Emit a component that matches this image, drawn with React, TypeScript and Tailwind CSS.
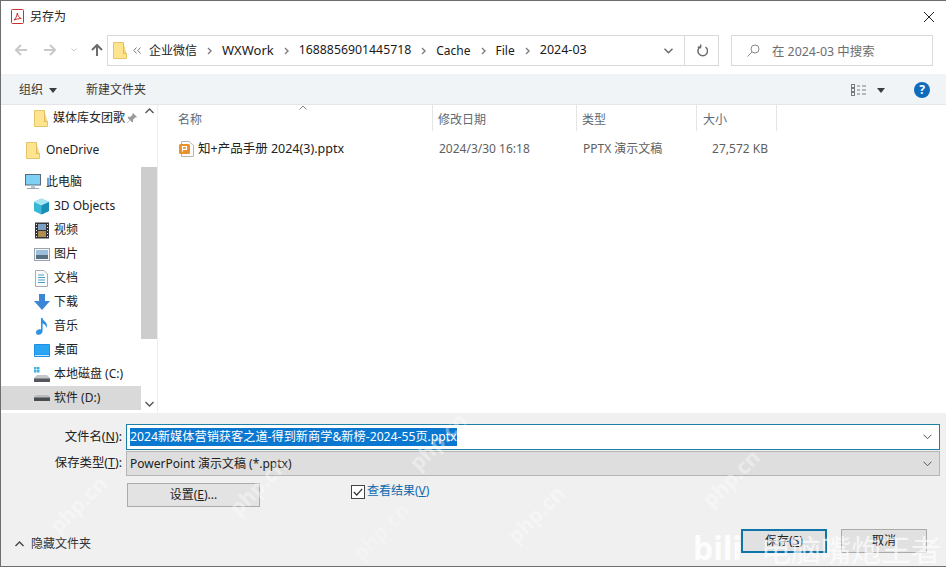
import React from "react";

const Folder = ({ className = "" }: { className?: string }) => (
  <svg width="14" height="17" viewBox="0 0 14 17" className={className}>
    <path d="M0.5 0.5H10.5V11.5H13.5V16.5H0.5Z" fill="#ffe48f" stroke="#e6c56a" />
    <path d="M10.5 1V11.5H13.5" fill="#f5d77e" stroke="#e0bd60" />
  </svg>
);

const Arrow = ({ dir, color }: { dir: "l" | "r" | "u"; color: string }) => {
  const d =
    dir === "l"
      ? "M12 6H1M6 1 1 6l5 5"
      : dir === "r"
        ? "M0 6h11M6 1l5 5-5 5"
        : "M6 12V1M1 6l5-5 5 5";
  return (
    <svg width="12" height="13" viewBox="0 0 12 13" fill="none" stroke={color} strokeWidth="2">
      <path d={d} />
    </svg>
  );
};

const Sep = () => (
  <svg width="5" height="8" viewBox="0 0 5 8" fill="none" stroke="#7d7d7d" strokeWidth="1.4" className="mx-[10px]">
    <path d="M1 1l3 3-3 3" />
  </svg>
);

const Caret = () => (
  <svg width="8" height="5" viewBox="0 0 8 5" fill="#3c3c3c">
    <path d="M0 0h8L4 5z" />
  </svg>
);

const Chev = () => (
  <svg width="9" height="6" viewBox="0 0 9 6" fill="none" stroke="#555" strokeWidth="1">
    <path d="M0.5 0.7 4.5 4.7 8.5 0.7" />
  </svg>
);

const Ic3D = () => (
  <svg width="17" height="17" viewBox="0 0 17 17">
    <path d="M8.5 0.5 16 4v9l-7.5 3.5L1 13V4z" fill="#39b7d6" />
    <path d="M8.5 0.5 16 4 8.5 7.5 1 4z" fill="#a6e6f2" />
    <path d="M8.5 7.5 16 4v9l-7.5 3.5z" fill="#1b8fb5" />
  </svg>
);
const IcVideo = () => (
  <svg width="14" height="17" viewBox="0 0 14 17">
    <rect x="0" y="0.5" width="14" height="16" fill="#33343a" />
    <rect x="3" y="2" width="8" height="6" fill="#7d9fc0" />
    <rect x="3" y="9" width="8" height="6" fill="#b08c4e" />
    <path d="M1 2h1v1H1zM1 5h1v1H1zM1 8h1v1H1zM1 11h1v1H1zM1 14h1v1H1zM12 2h1v1h-1zM12 5h1v1h-1zM12 8h1v1h-1zM12 11h1v1h-1zM12 14h1v1h-1z" fill="#eee" />
  </svg>
);
const IcPic = () => (
  <svg width="16" height="13" viewBox="0 0 16 13">
    <rect x="0.5" y="0.5" width="15" height="12" fill="#f4f6f8" stroke="#9aa3ad" />
    <rect x="2" y="2" width="12" height="5" fill="#9cc0dc" />
    <rect x="2" y="7" width="12" height="4" fill="#56707f" />
  </svg>
);
const IcDoc = () => (
  <svg width="13" height="17" viewBox="0 0 13 17" fill="none">
    <path d="M0.5 0.5H9L12.5 4V16.5H0.5Z" fill="#fbfcfd" stroke="#a6adb4" />
    <path d="M3 5h6M3 7.5h7M3 10h7M3 12.5h7" stroke="#4f9dc7" />
  </svg>
);
const IcDown = () => (
  <svg width="16" height="16" viewBox="0 0 16 16">
    <path d="M5 0h6v7h5l-8 9-8-9h5z" fill="#3a87d6" />
  </svg>
);
const IcMusic = () => (
  <svg width="12" height="17" viewBox="0 0 12 17">
    <path d="M5 0h1.6c.3 3 4.4 3.7 4.4 7.5 0 1-.3 1.8-.8 2.4.2-2.5-2-3.8-3.6-4.3V13c0 2.2-2 3.8-4 3.8S0 15.8 0 14.2s1.8-3 3.5-3c.6 0 1.1.1 1.5.3z" fill="#2f93e0" />
  </svg>
);
const IcDesk = () => (
  <svg width="16" height="13" viewBox="0 0 16 13">
    <rect x="0" y="0" width="16" height="13" rx="1" fill="#1d8fe6" />
    <rect x="1" y="1" width="14" height="9.5" fill="#2ca6f2" />
    <rect x="1" y="11" width="14" height="1" fill="#cfe8fa" />
  </svg>
);
const IcC = () => (
  <svg width="16" height="15" viewBox="0 0 16 15">
    <path d="M0 0h2.5v2.5H0zM3 0h2.5v2.5H3zM0 3h2.5v2.5H0zM3 3h2.5v2.5H3z" fill="#3ab2dc" />
    <path d="M3 8h10l3 3v4H0v-4z" fill="#c4c7c9" />
    <rect x="0" y="11.5" width="16" height="3.5" fill="#54585c" />
  </svg>
);
const IcD = () => (
  <svg width="16" height="6" viewBox="0 0 16 6">
    <path d="M2 0h12l2 2v4H0V2z" fill="#b9bcbe" />
    <rect x="0" y="2.5" width="16" height="3.5" fill="#4a4d50" />
  </svg>
);
const IcPc = () => (
  <svg width="16" height="16" viewBox="0 0 16 16">
    <rect x="0.5" y="0.5" width="15" height="10.5" fill="#7fd0f5" stroke="#5a6a78" />
    <path d="M6 11.5h4V14H6z" fill="#b9c4cc" />
    <path d="M2 14.5h12" stroke="#9aa7b0" />
  </svg>
);
const IcPpt = () => (
  <svg width="15" height="16" viewBox="0 0 15 16">
    <path d="M2.5 0.5H10L14.5 4.5V15.5H2.5Z" fill="#fdfdfd" stroke="#b4b4b4" />
    <rect x="0" y="3" width="11" height="10" rx="1.5" fill="#e8912d" />
    <path d="M3.5 10.5V5.5h4v2.8h-4" fill="none" stroke="#fff" strokeWidth="1.2" />
  </svg>
);

const nav: { label: string; icon: React.ReactNode; cls: string }[] = [
  { label: "3D Objects", icon: <Ic3D />, cls: "h-[24px]" },
  { label: "视频", icon: <IcVideo />, cls: "h-[24px]" },
  { label: "图片", icon: <IcPic />, cls: "h-[24px]" },
  { label: "文档", icon: <IcDoc />, cls: "h-[24px]" },
  { label: "下载", icon: <IcDown />, cls: "h-[24px]" },
  { label: "音乐", icon: <IcMusic />, cls: "h-[24px]" },
  { label: "桌面", icon: <IcDesk />, cls: "h-[24px]" },
  { label: "本地磁盘 (C:)", icon: <IcC />, cls: "h-[24px]" },
  { label: "软件 (D:)", icon: <IcD />, cls: "h-[24px] bg-[#d9d9d9]" },
];

const Wm = ({ cls }: { cls: string }) => (
  <span className={`absolute -rotate-45 text-[21px] font-bold text-white/40 pointer-events-none ${cls}`}>php.cn</span>
);

export default function App() {
  return (
    <div
      className="relative w-[946px] h-[567px] overflow-hidden bg-white border-t border-l border-b border-[#6e6e6e] flex flex-col text-[12px] text-[#222]"
      style={{ fontFamily: '"Noto Sans","Noto Sans CJK SC",sans-serif' }}
    >
      {/* title */}
      <div className="h-[31px] shrink-0 flex items-center pl-[10px] pr-[10px]">
        <svg width="13" height="15" viewBox="0 0 13 15" fill="none" stroke="#c8302f">
          <path d="M1.5 0.5h10a1 1 0 0 1 1 1v12a1 1 0 0 1-1 1h-10a1 1 0 0 1-1-1v-12a1 1 0 0 1 1-1z" fill="#fff" />
          <path d="M3 11c1.5-1 3-4 3.3-7 .5 3 2 5 4 5.5-2 0-4.5.5-7.3 1.500z" strokeWidth="1" />
        </svg>
        <span className="ml-[6px] text-[#222]">另存为</span>
        <svg width="12" height="12" viewBox="0 0 12 12" stroke="#222" strokeWidth="1" className="ml-auto mr-[1px]">
          <path d="M1 1l10 10M11 1 1 11" />
        </svg>
      </div>

      {/* address */}
      <div className="h-[42px] shrink-0 flex items-start pt-[3px] pl-[14px]">
        <div className="flex items-center h-[30px] w-[92px] gap-[17px]">
          <Arrow dir="l" color="#c9c9c9" />
          <Arrow dir="r" color="#c9c9c9" />
          <div className="flex items-center gap-[14px] -ml-[2px]">
            <svg width="6" height="4" viewBox="0 0 6 4" fill="none" stroke="#c9c9c9">
              <path d="M0.5 0.5 3 3l2.5-2.5" />
            </svg>
            <Arrow dir="u" color="#6d6d6d" />
          </div>
        </div>
        <div className="w-[612px] h-[31px] border border-[#d9d9d9] flex items-center">
          <div className="flex-1 flex items-center pl-[5px] min-w-0">
            <Folder />
            <svg width="8" height="7" viewBox="0 0 8 7" fill="none" stroke="#7d7d7d" className="ml-[6px] mr-[8px]">
              <path d="M3.5 0.5 0.8 3.5l2.7 3M7.5 0.5 4.8 3.5l2.7 3" />
            </svg>
            <span className="text-[#1a1a1a]">企业微信</span>
            <Sep />
            <span className="text-[#1a1a1a] text-[13px]">WXWork</span>
            <Sep />
            <span className="text-[#1a1a1a] text-[12.3px]">1688856901445718</span>
            <Sep />
            <span className="text-[#1a1a1a]">Cache</span>
            <Sep />
            <span className="text-[#1a1a1a]">File</span>
            <Sep />
            <span className="text-[#1a1a1a] text-[12.5px]">2024-03</span>
            <svg width="9" height="6" viewBox="0 0 9 6" fill="none" stroke="#666" strokeWidth="1.4" className="ml-auto mr-[11px]">
              <path d="M0.5 0.7 4.5 4.7 8.5 0.7" />
            </svg>
          </div>
          <div className="w-[34px] h-full border-l border-[#d9d9d9] flex items-center justify-center">
            <svg width="12" height="13" viewBox="0 0 12 13" fill="none" stroke="#6b6b6b" strokeWidth="1.5">
              <path d="M4 3a4.8 4.8 0 1 0 5.5 0" />
              <path d="M4.8 0.5 4.5 3.5 1.8 3" />
            </svg>
          </div>
        </div>
        <div className="ml-[12px] w-[202px] h-[31px] border border-[#d9d9d9] flex items-center pl-[15px] text-[#6d6d6d]">
          <svg width="13" height="13" viewBox="0 0 13 13" fill="none" stroke="#8a8a8a">
            <circle cx="8" cy="5" r="4" />
            <path d="M5 8l-4.5 4.5" />
          </svg>
          <span className="ml-[12px] mt-[3px] text-[12.4px]">在 2024-03 中搜索</span>
        </div>
      </div>

      {/* toolbar */}
      <div className="h-[31px] shrink-0 bg-[#f1f4f6] border-b border-[#e6e6e6] flex items-center pl-[18px] pt-[2px] text-[#3a3a3a]">
        <span>组织</span>
        <span className="ml-[6px]">
          <Caret />
        </span>
        <span className="ml-[29px]">新建文件夹</span>
        <div className="ml-auto flex items-center">
          <svg width="16" height="13" viewBox="0 0 16 13" fill="none" stroke="#7a7a7a">
            <rect x="0.5" y="0.5" width="3" height="3" />
            <rect x="0.5" y="4.5" width="3" height="3" />
            <rect x="0.5" y="8.5" width="3" height="3" />
            <path d="M6 2h3M11 2h4M6 6h3M11 6h4M6 10h3M11 10h4" />
          </svg>
          <span className="ml-[10px] mr-[29px]">
            <Caret />
          </span>
          <span className="w-[16px] h-[16px] rounded-full bg-[#0f6cbd] text-white font-bold text-[12px] leading-[16px] text-center mr-[16px]">
            ?
          </span>
        </div>
      </div>

      {/* main */}
      <div className="h-[308px] shrink-0 flex">
        <div className="w-[140px] shrink-0 overflow-hidden flex flex-col text-[#222]">
          <div className="h-[26px] flex items-center pl-[33px] shrink-0">
            <Folder />
            <span className="ml-[5px] w-[73px] overflow-hidden whitespace-nowrap">媒体库女团歌</span>
            <svg width="10" height="10" viewBox="0 0 10 10" fill="#9a9a9a" className="ml-[1px]">
              <path d="M6 0l4 4-1 .6-.6-.3L6 6.7l.2 1.800-.9.900L3.100 7.200.4 9.900l-.3-.3 2.700-2.700L.6 4.700l.9-.9 1.800.2 2.400-2.400-.3-.6z" />
            </svg>
          </div>
          <div className="h-[38px] flex items-center pl-[25px] shrink-0">
            <Folder />
            <span className="ml-[6px]">OneDrive</span>
          </div>
          <div className="h-[25px] flex items-center pl-[24px] shrink-0 pt-[1px]">
            <IcPc />
            <span className="ml-[5px]">此电脑</span>
          </div>
          {nav.map((n) => (
            <div key={n.label} className={`${n.cls} flex items-center shrink-0`}>
              <span className="w-[53px] pl-[32px] flex justify-center pr-[4px] shrink-0">{n.icon}</span>
              <span className="whitespace-nowrap">{n.label}</span>
            </div>
          ))}
        </div>
        {/* scrollbar */}
        <div className="w-[16px] shrink-0 flex flex-col bg-[#f4f4f4]">
          <div className="h-[16px] pt-[3px] flex justify-center bg-white">
            <svg width="9" height="6" viewBox="0 0 9 6" fill="none" stroke="#555" strokeWidth="1.4">
              <path d="M0.5 5 4.5 1l4 4" />
            </svg>
          </div>
          <div className="h-[46px] bg-white" />
          <div className="h-[172px] bg-[#cdcdcd]" />
          <div className="flex-1 bg-white" />
          <div className="h-[18px] flex items-center justify-center bg-white">
            <svg width="9" height="6" viewBox="0 0 9 6" fill="none" stroke="#555" strokeWidth="1.4">
              <path d="M0.5 1l4 4 4-4" />
            </svg>
          </div>
        </div>
        {/* list */}
        <div className="flex-1 border-l border-[#eeeeee] flex flex-col relative">
          <div className="h-[26px] flex text-[#5e6a75] shrink-0">
            <div className="w-[275px] border-r border-[#e5e5e5] pl-[20px] pt-[6px]">名称</div>
            <div className="w-[144px] border-r border-[#e5e5e5] pl-[5px] pt-[6px]">修改日期</div>
            <div className="w-[120px] border-r border-[#e5e5e5] pl-[5px] pt-[6px]">类型</div>
            <div className="w-[80px] border-r border-[#e5e5e5] pl-[6px] pt-[6px]">大小</div>
          </div>
          <svg width="8" height="5" viewBox="0 0 8 5" fill="none" stroke="#8a8a8a" className="absolute left-[141px] top-0">
            <path d="M0.5 4.5 4 1l3.5 3.5" />
          </svg>
          <div className="h-[24px] mt-[6px] flex items-center text-[#5f5f5f]">
            <div className="w-[275px] pl-[21px] flex items-center shrink-0 text-[#222]">
              <IcPpt />
              <span className="ml-[4px] text-[12.5px]">知+产品手册 2024(3).pptx</span>
            </div>
            <div className="w-[144px] pl-[6px] shrink-0">2024/3/30 16:18</div>
            <div className="w-[120px] pl-[6px] shrink-0">PPTX 演示文稿</div>
            <div className="w-[71px] text-right shrink-0">27,572 KB</div>
          </div>
        </div>
      </div>

      {/* form */}
      <div className="flex-1 bg-[#f0f0f0] flex flex-col pt-[11px] pl-[61px] pr-[6px]">
        <div className="flex items-center h-[26px]">
          <span className="w-[60px] flex justify-end text-[#222] text-[12.4px] whitespace-nowrap shrink-0">
            <span>
              文件名(<u>N</u>):
            </span>
          </span>
          <div className="ml-[4px] flex-1 h-[26px] bg-white border border-[#1d7fa8] flex items-center pl-[3px] pr-[7px]">
            <span className="bg-[#0a78d0] text-white text-[12.2px] leading-[18px] whitespace-nowrap">2024新媒体营销获客之道-得到新商学&amp;新榜-2024-55页.pptx</span>
            <span className="ml-auto">
              <Chev />
            </span>
          </div>
        </div>
        <div className="flex items-center h-[25px] mt-[1px]">
          <span className="w-[60px] flex justify-end text-[#222] text-[12.4px] whitespace-nowrap shrink-0">
            <span>
              保存类型(<u>T</u>):
            </span>
          </span>
          <div className="ml-[4px] flex-1 h-[25px] bg-[#dedede] border border-[#b5b5b5] flex items-center pl-[3px] pr-[7px] text-[#222]">
            <span className="whitespace-nowrap">PowerPoint 演示文稿 (*.pptx)</span>
            <span className="ml-auto">
              <Chev />
            </span>
          </div>
        </div>
        <div className="flex items-start mt-[7px] pl-[65px]">
          <button className="w-[133px] h-[24px] bg-[#e3e3e3] border border-[#ababab] text-[#222] text-center">
            设置(<u>E</u>)...
          </button>
          <span className="ml-[91px] mt-[2px] w-[14px] h-[14px] bg-white border border-[#444] flex items-center justify-center">
            <svg width="10" height="8" viewBox="0 0 10 8" fill="none" stroke="#333" strokeWidth="1.2">
              <path d="M0.8 4 3.8 7 9.2 0.8" />
            </svg>
          </span>
          <span className="ml-[2px] text-[#0c6ab0] -mt-[1px]">
            查看结果(<u>V</u>)
          </span>
        </div>
        <div className="flex items-start mt-[22px] -ml-[47px] pr-[6px]">
          <div className="flex items-center mt-[6px]">
            <svg width="9" height="6" viewBox="0 0 9 6" fill="none" stroke="#444" strokeWidth="1.4">
              <path d="M0.5 5 4.5 1l4 4" />
            </svg>
            <span className="ml-[7px] text-[#333]">隐藏文件夹</span>
          </div>
          <button className="ml-auto mr-[14px] w-[86px] h-[24px] bg-[#e1e1e1] border-2 border-[#0f74a8] text-[#222]">
            保存(<u>S</u>)
          </button>
          <button className="mr-[7px] w-[86px] h-[24px] bg-[#e1e1e1] border border-[#ababab] text-[#222]">取消</button>
        </div>
      </div>

      {/* watermarks over the dialog */}
      <Wm cls="left-[42px] top-[488px]" />
      <Wm cls="left-[222px] top-[470px]" />
      <Wm cls="left-[402px] top-[425px]" />
      <Wm cls="left-[345px] top-[515px] opacity-60" />
      <Wm cls="left-[500px] top-[498px]" />
      <Wm cls="left-[695px] top-[462px]" />
      <span className="absolute left-[692px] top-[531px] text-[32px] font-bold leading-none text-white/85 pointer-events-none whitespace-nowrap">
        bili
      </span>
      <span className="absolute left-[760px] top-[534px] text-[30px] leading-none text-white/65 pointer-events-none whitespace-nowrap">
        电脑嘴炮王者
      </span>
    </div>
  );
}
